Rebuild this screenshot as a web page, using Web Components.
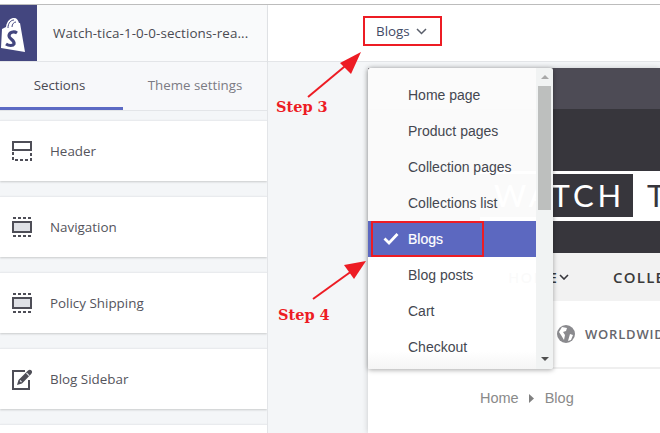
<!DOCTYPE html>
<html lang="en">
<head>
<meta charset="utf-8">
<title>Theme editor</title>
<style>
    html, body { margin: 0; height: 100%; overflow: hidden; background: #fff; }
    body { font-family: "Open Sans", "Noto Sans", sans-serif; }
</style>
</head>
<body>
<editor-app>
    <editor-sidebar slot="side">
        <section-card label="Header"><svg slot="icon" width="22" height="22" viewBox="0 0 22 22"><rect x="2" y="2" width="18" height="8" fill="none" stroke="#4e4e57" stroke-width="2"/><path d="M2 12v8h18v-8" fill="none" stroke="#4e4e57" stroke-width="2" stroke-dasharray="3 2"/></svg></section-card>
        <section-card label="Navigation"><svg slot="icon" width="22" height="22" viewBox="0 0 22 22"><path d="M2 2h18M2 20h18" fill="none" stroke="#4e4e57" stroke-width="2" stroke-dasharray="3 2"/><rect x="2" y="6" width="18" height="10" fill="#dfe1e6" stroke="#4e4e57" stroke-width="2"/></svg></section-card>
        <section-card label="Policy Shipping"><svg slot="icon" width="22" height="22" viewBox="0 0 22 22"><path d="M2 2h18M2 20h18" fill="none" stroke="#4e4e57" stroke-width="2" stroke-dasharray="3 2"/><rect x="2" y="6" width="18" height="10" fill="#dfe1e6" stroke="#4e4e57" stroke-width="2"/></svg></section-card>
        <section-card label="Blog Sidebar"><svg slot="icon" width="22" height="22" viewBox="0 0 22 22"><path d="M14 3H2v18h16V12" fill="none" stroke="#4e4e57" stroke-width="2"/><path d="M6 17l1.500-5L17 2.500c1.200-1.200 2.700-1 3.500 0s.8 2.300-.3 3.400L11 15.500z" fill="#4e4e57"/><path d="M15.500 5l2.800 2.800M9 12.500l1.500 1.500" stroke="#dfe1e6" stroke-width="1.200" fill="none"/></svg></section-card>
        <section-card></section-card>
    </editor-sidebar>
    <template-picker slot="picker">Blogs</template-picker>
    <store-preview slot="main"></store-preview>
    <template-menu slot="over"></template-menu>
    <step-note slot="over" label="Step 3" x="276" y="97" d="M308 97L350 62" tip="M361 52L340 63L351 74Z"></step-note>
    <step-note slot="over" label="Step 4" x="278" y="305" d="M313 299L356 268" tip="M366 261L344 265L354 279Z"></step-note>
</editor-app>

<script>
class EditorApp extends HTMLElement {
    constructor() {
        super();
        this.attachShadow({mode: "open"});
        this.shadowRoot.innerHTML = `
            <style>
                :host {
                    display: grid;
                    grid-template-columns: 268px 1fr;
                    grid-template-rows: 1fr;
                    height: 433px;
                    padding-top: 4px;
                    box-sizing: border-box;
                    position: relative;
                    overflow: hidden;
                }
                .right {
                    display: flex;
                    flex-direction: column;
                    border-top: 1px solid #bdbdbd;
                    min-width: 0;
                }
                .side {
                    border-top: 1px solid #bdbdbd;
                    min-width: 0;
                }
                .bar {
                    height: 56px;
                    background: #fff;
                    border-bottom: 1px solid #e3e5e8;
                    box-shadow: 0 1px 2px rgba(0,0,0,.06);
                    display: flex;
                    align-items: center;
                    padding-left: 95px;
                }
                .stage {
                    flex: 1;
                    background: #f4f6f8;
                    padding: 6px 0 0 100px;
                    min-height: 0;
                    overflow: hidden;
                }
            </style>
            <div class="side"><slot name="side"></slot></div>
            <div class="right">
                <div class="bar"><slot name="picker"></slot></div>
                <div class="stage"><slot name="main"></slot></div>
            </div>
            <slot name="over"></slot>
        `;
    }
}
window.customElements.define('editor-app', EditorApp);

class EditorSidebar extends HTMLElement {
    constructor() {
        super();
        this.attachShadow({mode: "open"});
        this.shadowRoot.innerHTML = `
            <style>
                :host {
                    display: block;
                    height: 428px;
                    background: #f4f6f8;
                    border-right: 1px solid #e3e5e8;
                    box-sizing: border-box;
                    overflow: hidden;
                    color: #4a4a52;
                }
                .top {
                    display: flex;
                    align-items: center;
                    height: 56px;
                    background: #f9fafb;
                    border-bottom: 1px solid #e3e5e8;
                }
                .logo {
                    width: 37px;
                    height: 56px;
                    background: #43467f;
                    flex: none;
                }
                .name {
                    font-size: 13.4px;
                    margin-left: 16px;
                    letter-spacing: .1px;
                    white-space: nowrap;
                }
                .tabs {
                    display: grid;
                    grid-template-columns: 123px 1fr;
                    height: 48px;
                    border-bottom: 1px solid #e3e5e8;
                    background: #f7f8fa;
                    font-size: 13.3px;
                }
                .tabs div {
                    display: flex;
                    align-items: center;
                    justify-content: center;
                    padding-bottom: 3px;
                    box-sizing: border-box;
                }
                .tabs .on {
                    border-bottom: 3px solid #5c6ac4;
                    padding-bottom: 0;
                    padding-right: 4px;
                }
                .tabs .off {
                    color: #7b7b83;
                }
                .list {
                    display: flex;
                    flex-direction: column;
                    gap: 15px;
                    padding-top: 9px;
                }
            </style>
            <div class="top">
                <div class="logo">
                    <svg width="37" height="56" viewBox="0 0 37 56">
                        <path d="M2 24L6 22C7 15 11 13 14 13C17 13 18 15 19 18L20 18L25 47L1 43Z" fill="#fff"/>
                        <path d="M8 23C8 18 11 15 14 15M12 22C12 19 14 17 16 17" fill="none" stroke="#43467f" stroke-width="1"/>
                        <path d="M17 28C14 26 9 27 9 31C9 34 15 35 14 39C13 41 9 41 6 39" fill="none" stroke="#43467f" stroke-width="3.2"/>
                    </svg>
                </div>
                <span class="name">Watch-tica-1-0-0-sections-rea...</span>
            </div>
            <div class="tabs">
                <div class="on">Sections</div>
                <div class="off">Theme settings</div>
            </div>
            <div class="list"><slot></slot></div>
        `;
    }
}
window.customElements.define('editor-sidebar', EditorSidebar);

class SectionCard extends HTMLElement {
    constructor() {
        super();
        this.attachShadow({mode: "open"});
        this.shadowRoot.innerHTML = `
            <style>
                :host {
                    display: flex;
                    align-items: center;
                    height: 61px;
                    flex: none;
                    background: #fff;
                    box-sizing: border-box;
                    border-top: 1px solid #e9ebee;
                    box-shadow: 0 1px 2px rgba(0,0,0,.18);
                    padding-left: 11px;
                    font-size: 13.4px;
                    color: #54545c;
                }
                .icon {
                    width: 22px;
                    height: 22px;
                    flex: none;
                    margin-right: 17px;
                    display: flex;
                }
            </style>
            <span class="icon"><slot name="icon"></slot></span>
            <span class="label"></span>
        `;
        this.shadowRoot.querySelector(".label").textContent = this.getAttribute("label") || "";
    }
}
window.customElements.define('section-card', SectionCard);

class TemplatePicker extends HTMLElement {
    constructor() {
        super();
        this.attachShadow({mode: "open"});
        this.shadowRoot.innerHTML = `
            <style>
                :host {
                    display: flex;
                    align-items: center;
                    gap: 6px;
                    width: 79px;
                    height: 30px;
                    box-sizing: border-box;
                    border: 2px solid #ed1c24;
                    padding-left: 11px;
                    font-size: 13.4px;
                    color: #3f4a66;
                    margin-top: -4px;
                }
            </style>
            <slot></slot>
            <svg width="11" height="7" viewBox="0 0 11 7"><path d="M1 1l4.500 4.500L10 1" fill="none" stroke="#5a5f6b" stroke-width="1.500"/></svg>
        `;
    }
}
window.customElements.define('template-picker', TemplatePicker);

class StorePreview extends HTMLElement {
    constructor() {
        super();
        this.attachShadow({mode: "open"});
        this.shadowRoot.innerHTML = `
            <style>
                :host {
                    display: block;
                    height: 365px;
                    background: #fff;
                    box-shadow: 0 0 6px rgba(0,0,0,.18);
                }
                .clip { height: 100%; overflow: hidden; }
                .promo { height: 41px; background: #4d4b55; }
                .head {
                    height: 144px;
                    box-sizing: border-box;
                    background: #37363c;
                    padding: 62px 0 0 112px;
                }
                .brand {
                    height: 50px;
                    background: #fff;
                    display: flex;
                    align-items: flex-start;
                    white-space: nowrap;
                    font-family: Lato, sans-serif;
                    font-size: 31px;
                    font-weight: 400;
                    letter-spacing: 4px;
                    line-height: 43px;
                    padding-top: 3px;
                    box-sizing: border-box;
                }
                .brand b {
                    font-weight: 400;
                    background: #37363c;
                    color: #fff;
                    height: 43px;
                    width: 153px;
                    box-sizing: border-box;
                    padding-left: 14px;
                    margin-right: 14px;
                    flex: none;
                }
                .brand span { color: #37363c; }
                .nav {
                    height: 48px;
                    background: #f2f2f2;
                    display: flex;
                    align-items: center;
                    font-size: 15px;
                    font-weight: 600;
                    letter-spacing: 1.200px;
                    color: #3a3a3a;
                    padding-left: 140px;
                    white-space: nowrap;
                }
                .nav svg { margin-left: 1px; margin-right: 44px; flex: none; }
                .ship {
                    height: 68px;
                    display: flex;
                    align-items: center;
                    font-size: 13px;
                    font-weight: 600;
                    letter-spacing: .8px;
                    color: #66666c;
                    white-space: nowrap;
                    border-bottom: 2px solid #efefef;
                    box-sizing: border-box;
                    margin-left: 112px;
                    padding-left: 77px;
                }
                .ship svg { margin-right: 10px; flex: none; }
                .crumbs {
                    display: flex;
                    align-items: center;
                    gap: 9px;
                    padding: 21px 0 0 112px;
                    font-family: "Liberation Sans", sans-serif;
                    font-size: 14.500px;
                    color: #8a8a8a;
                }
                .crumbs svg { margin-right: 2px; margin-left: 1px; }
            </style>
            <div class="clip">
            <div class="promo"></div>
            <div class="head">
                <div class="brand"><b>WATCH</b><span>TICA</span></div>
            </div>
            <div class="nav">HOME<svg width="10" height="6" viewBox="0 0 10 6"><path d="M1 1l4 4 4-4" fill="none" stroke="#37363c" stroke-width="1.600"/></svg>COLLECTION</div>
            <div class="ship">
                <svg width="18" height="18" viewBox="0 0 18 18"><circle cx="9" cy="9" r="9" fill="#8a8a8e"/><path d="M5 2l5 1-1 3-3 1 2 3-1 5-3-5-2-3zM13 9l3 1-2 5-3 1z" fill="#fff"/></svg>
                WORLDWIDE
            </div>
            <div class="crumbs">Home<svg width="5" height="9" viewBox="0 0 5 9"><path d="M0 0l5 4.500-5 4.500z" fill="#808080"/></svg>Blog</div>
            </div>
        `;
    }
}
window.customElements.define('store-preview', StorePreview);

class TemplateMenu extends HTMLElement {
    constructor() {
        super();
        this.attachShadow({mode: "open"});
        const items = ["Home page", "Product pages", "Collection pages", "Collections list", "Blogs", "Blog posts", "Cart", "Checkout"];
        const rows = items.map(name => `
            <li class="${name === "Blogs" ? "on" : ""}">${name === "Blogs" ? `<svg width="16" height="13" viewBox="0 0 16 13"><path d="M1.500 6.500l4.500 4.500L14.500 2" fill="none" stroke="#fff" stroke-width="2.800"/></svg><i></i>` : ""}${name}</li>`).join("");
        this.shadowRoot.innerHTML = `
            <style>
                :host {
                    display: flex;
                    position: absolute;
                    left: 368px;
                    top: 68px;
                    width: 185px;
                    height: 301px;
                    box-shadow: 0 1px 5px rgba(0,0,0,.35);
                    font-family: "Liberation Sans", sans-serif;
                    font-size: 14px;
                    color: #444750;
                    border-radius: 2px;
                    overflow: hidden;
                }
                ul {
                    flex: 1;
                    margin: 0;
                    padding: 9px 0 0;
                    list-style: none;
                    background: rgba(255,255,255,.975);
                    position: relative;
                }
                ul::after {
                    content: "";
                    position: absolute;
                    left: 0;
                    right: 0;
                    bottom: 0;
                    height: 18px;
                    background: linear-gradient(rgba(245,245,245,0), #f5f5f5);
                }
                li {
                    height: 36px;
                    line-height: 36px;
                    padding-left: 40px;
                    position: relative;
                }
                li.on {
                    background: #5c68c0;
                    color: #fff;
                    -webkit-text-stroke: .2px #fff;
                }
                li svg {
                    position: absolute;
                    left: 15px;
                    top: 11px;
                }
                li i {
                    position: absolute;
                    left: 3px;
                    top: 0;
                    width: 113px;
                    height: 36px;
                    box-sizing: border-box;
                    border: 2px solid #ed1c24;
                }
                .bar {
                    width: 17px;
                    flex: none;
                    background: #f1f3f3;
                    display: flex;
                    flex-direction: column;
                    align-items: center;
                }
                .thumb {
                    width: 13px;
                    height: 124px;
                    background: #bdbfbe;
                    margin-top: 7px;
                }
                .up, .down {
                    width: 0;
                    height: 0;
                    border-left: 4px solid transparent;
                    border-right: 4px solid transparent;
                }
                .up { border-bottom: 4px solid #a8a8a8; margin-top: 7px; }
                .down { border-top: 4px solid #505050; margin-top: auto; margin-bottom: 8px; }
            </style>
            <ul>${rows}</ul>
            <div class="bar"><div class="up"></div><div class="thumb"></div><div class="down"></div></div>
        `;
    }
}
window.customElements.define('template-menu', TemplateMenu);

class StepNote extends HTMLElement {
    constructor() {
        super();
        this.attachShadow({mode: "open"});
        const x = this.getAttribute("x"), y = this.getAttribute("y");
        this.shadowRoot.innerHTML = `
            <style>
                :host { display: contents; }
                svg { position: absolute; left: 0; top: 0; pointer-events: none; }
                span {
                    position: absolute;
                    left: ${x}px;
                    top: ${y}px;
                    font-family: "DejaVu Serif", serif;
                    font-weight: bold;
                    font-size: 14.500px;
                    line-height: 20px;
                    color: #ed1c24;
                    white-space: nowrap;
                }
            </style>
            <svg width="660" height="433" viewBox="0 0 660 433">
                <path d="${this.getAttribute("d")}" stroke="#ed1c24" stroke-width="2" fill="none"/>
                <path d="${this.getAttribute("tip")}" fill="#ed1c24"/>
            </svg>
            <span>${this.getAttribute("label")}</span>
        `;
    }
}
window.customElements.define('step-note', StepNote);
</script>
</body>
</html>
